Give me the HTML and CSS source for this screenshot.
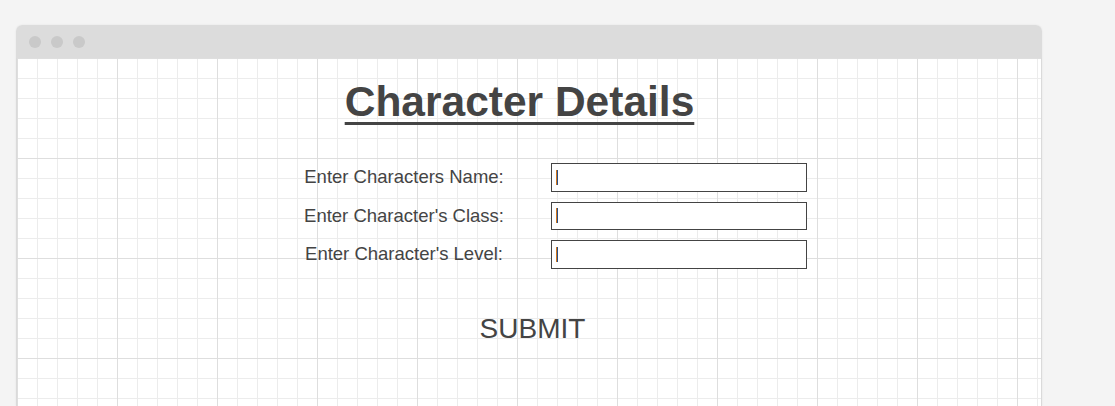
FILE: index.html
```html
<!DOCTYPE html>
<html lang="en">
<head>
<meta charset="utf-8">
<title>Character Details</title>
<link rel="stylesheet" href="styles.css">
</head>
<body>
  <div class="window">
    <div class="titlebar">
      <span class="dot"></span><span class="dot"></span><span class="dot"></span>
    </div>
    <div class="canvas">
      <h1 class="title">Character Details</h1>
      <form class="form">
        <div class="row">
          <label class="label">Enter Characters Name:</label>
          <div class="field"><span class="caret"></span></div>
        </div>
        <div class="row">
          <label class="label">Enter Character's Class:</label>
          <div class="field"><span class="caret"></span></div>
        </div>
        <div class="row">
          <label class="label">Enter Character's Level:</label>
          <div class="field"><span class="caret"></span></div>
        </div>
      </form>
      <div class="actions">
        <button class="submit" type="button">SUBMIT</button>
      </div>
    </div>
  </div>
</body>
</html>
```

FILE: styles.css
```css
html, body {
  margin: 0;
  padding: 0;
  background: #f4f4f4;
  font-family: "Liberation Sans", Arial, sans-serif;
  color: #444;
  overflow: hidden;
  height: 406px;
}

.window {
  margin: 25px 0 0 16px;
  width: 1026px;
  height: 381px;
  border-radius: 6px 6px 0 0;
  overflow: hidden;
  background: #fff;
  box-shadow: 0 0 2px rgba(0,0,0,0.08);
}

.titlebar {
  height: 33px;
  background: #dcdcdc;
  display: flex;
  align-items: center;
  gap: 10px;
  padding-left: 13px;
}

.dot {
  width: 12px;
  height: 12px;
  border-radius: 50%;
  background: #c9c9c9;
}

.canvas {
  height: 348px;
  border-left: 1px solid #dadada;
  border-right: 1px solid #dadada;
  background-color: #fff;
  background-image:
    linear-gradient(to right, #dedede 1px, transparent 1px),
    linear-gradient(to bottom, #dedede 1px, transparent 1px),
    linear-gradient(to right, #ececec 1px, transparent 1px),
    linear-gradient(to bottom, #ececec 1px, transparent 1px);
  background-size: 100px 100px, 100px 100px, 20px 20px, 20px 20px;
  background-position: 0 0;
  overflow: hidden;
}

.title {
  margin: 24px 0 0 0;
  padding-right: 19px;
  text-align: center;
  font-size: 42.5px;
  line-height: 40px;
  font-weight: bold;
  text-decoration: underline;
  text-decoration-thickness: 3px;
  text-underline-offset: 6px;
  color: #444;
}

.form {
  margin: 41px 0 0 287px;
  display: flex;
  flex-direction: column;
  gap: 10px;
}

.row {
  display: flex;
  align-items: center;
  gap: 47px;
}

.label {
  width: 200px;
  text-align: center;
  font-size: 18.5px;
  color: #444;
}

.field {
  box-sizing: border-box;
  width: 256px;
  height: 28.5px;
  border: 1px solid #444;
  background: #fff;
  display: flex;
  align-items: center;
  padding-left: 4px;
}

.caret {
  display: block;
  width: 1px;
  height: 15px;
  border-left: 1px solid #d0781e;
  background: #2c4f86;
}

.actions {
  margin-top: 44px;
  text-align: center;
  padding-left: 7px;
}

.submit {
  border: none;
  background: none;
  padding: 0;
  font-family: "Liberation Sans", Arial, sans-serif;
  font-size: 28px;
  color: #444;
}
```
